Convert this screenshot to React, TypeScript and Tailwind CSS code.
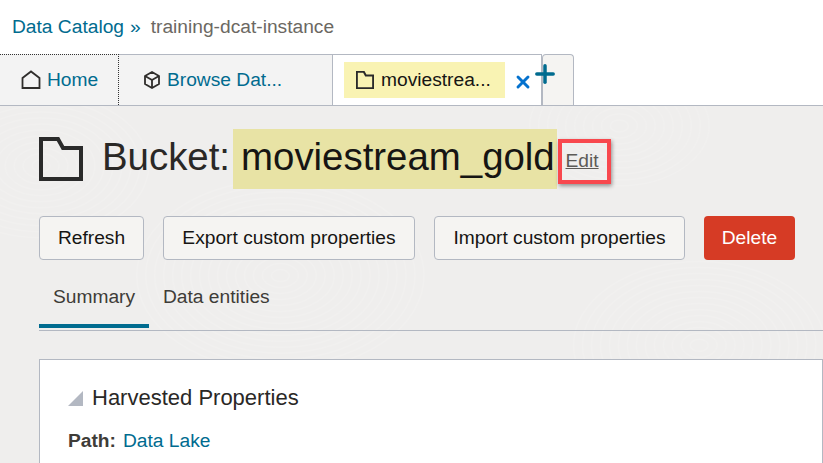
import React from 'react';
import { Plus, X } from 'lucide-react';

const HomeIcon = () => (
  <svg width="20" height="20" viewBox="0 0 20 20" fill="none" stroke="#2f2d2b" strokeWidth="1.8">
    <path d="M1.500 18V8L10 1.500 18.500 8v10z" />
  </svg>
);

const CubeIcon = () => (
  <svg width="18" height="18" viewBox="0 0 18 18" fill="none" stroke="#2f2d2b" strokeWidth="1.8" strokeLinejoin="round">
    <path d="M9 1l7 4v8l-7 4-7-4V5z" />
    <path d="M2 5l7 4 7-4M9 9v8" />
  </svg>
);

const FolderIcon = ({ size, strokeWidth }: { size: number; strokeWidth: number }) => (
  <svg width={size} height={size} viewBox="0 0 44 44" fill="none" stroke="#2a2a2a" strokeWidth={strokeWidth}>
    <path d="M2 2h17l5 9h18v31H2z" />
  </svg>
);

// faint swirls behind the page header
const swirls = [
  { cx: 280, cy: 170, rings: 16 },
  { cx: 40, cy: 60, rings: 12 },
  { cx: 700, cy: 240, rings: 14 },
  { cx: 620, cy: 20, rings: 10 },
];

const Pattern = () => (
  <svg className="absolute inset-0 w-full h-full" viewBox="0 0 823 358" fill="none" stroke="#f1f0ef" strokeWidth="1.500">
    {swirls.map((s) =>
      Array.from({ length: s.rings }, (_, i) => (
        <ellipse key={`${s.cx}-${i}`} cx={s.cx} cy={s.cy} rx={(i + 1) * 9} ry={(i + 1) * 6} />
      ))
    )}
  </svg>
);

const Button = ({ label, w }: { label: string; w: string }) => (
  <button className={`h-11 ${w} rounded border border-[#b3b8c2] bg-[#f5f4f2] text-[19.2px] text-[#161513]`}>{label}</button>
);

export default function App() {
  return (
    <div className="w-[823px] h-[463px] overflow-hidden bg-white font-['Liberation_Sans',sans-serif] text-[19.2px]">
      {/* Breadcrumb */}
      <div className="h-[54px] flex items-center pl-3 text-[#006b8f]">
        <span>Data Catalog</span>
        <span className="ml-[6px]">»</span>
        <span className="ml-[10px] text-[#6b6862]">training-dcat-instance</span>
      </div>

      {/* Tabs */}
      <div className="h-[51px] flex">
        <div className="w-[119px] flex items-center gap-[6px] pl-[21px] bg-[#f3f3f3] border-t border-r border-dotted border-[#333] text-[#006b8f]">
          <HomeIcon />
          <span>Home</span>
        </div>
        <div className="w-[213px] flex items-center gap-[6px] pl-[24px] bg-[#f3f3f3] border-t border-[#b3b8c2] text-[#006b8f]">
          <CubeIcon />
          <span>Browse Dat...</span>
        </div>
        <div className="relative w-[210px] pl-[11px] pt-[7px] bg-white border-x border-t border-[#b3b8c2]">
          <div className="w-[161px] h-9 flex items-center gap-[7px] pl-3 bg-[#f9f3b3] text-[#161513]">
            <FolderIcon size={18} strokeWidth={5} />
            <span>moviestrea...</span>
          </div>
          <X className="absolute left-[180px] top-[17px]" size={20} color="#0572ce" strokeWidth={3.500} />
          <Plus className="absolute left-[198px] top-[5px]" size={28} color="#006b8f" strokeWidth={3} />
        </div>
        <div className="w-[32px] bg-[#f5f4f2] border-x border-t border-[#b3b8c2] rounded-t" />
      </div>

      {/* Content */}
      <div className="relative h-[358px] bg-[#efeeed] border-t border-[#b3b8c2]">
        <Pattern />
        <div className="relative pl-[39px]">
          <div className="h-[84px] pt-[23px] flex items-start">
            <div className="mt-[8px]">
              <FolderIcon size={44} strokeWidth={4} />
            </div>
            <span className="ml-[19px] mt-[4px] text-[38.4px] leading-[48px] text-[#2a2826]">Bucket:</span>
            <span className="ml-[3px] w-[324px] h-[60px] pl-[8px] pt-[4px] bg-[#e8e3a5] text-[38.4px] leading-[48px] text-[#161513]">
              moviestream_gold
            </span>
            <div className="relative ml-[1px] mt-[10px] w-[53px] h-[45px] pr-[5px] flex items-center justify-center border-[4px] border-[#f8484e] shadow-[1px_2px_4px_rgba(0,0,0,0.4)]">
              <span className="underline text-[#5d5b57]">Edit</span>
            </div>
          </div>

          <div className="h-11 mt-[26px] flex">
            <Button label="Refresh" w="w-[105px]" />
            <div className="ml-[19px]"><Button label="Export custom properties" w="w-[252px]" /></div>
            <div className="ml-[19px]"><Button label="Import custom properties" w="w-[251px]" /></div>
            <button className="ml-[19px] h-11 w-[91px] rounded bg-[#d63b25] text-[19.2px] text-white">Delete</button>
          </div>

          <div className="mt-[4px] h-[67px] flex border-b border-[#b3b8c2]">
            <div className="w-[110px] h-[64px] pl-[14px] pt-[19px] border-b-4 border-[#006b8f] text-[#3e3c38]">Summary</div>
            <div className="ml-[14px] pt-[19px] text-[#3e3c38]">Data entities</div>
          </div>

          <div className="mt-[28px] h-[120px] bg-white border border-[#b3b8c2] pl-[28px]">
            <div className="mt-[24px] flex items-center">
              <svg width="15" height="15" viewBox="0 0 15 15"><path d="M15 0v15H0z" fill="#b3b8c2" /></svg>
              <span className="ml-[9px] text-[22px] leading-[28px] text-[#2a2826]">Harvested Properties</span>
            </div>
            <div className="mt-[15px] flex">
              <span className="font-bold text-[#3e3c38]">Path:</span>
              <span className="ml-[7px] text-[#006b8f]">Data Lake</span>
            </div>
          </div>
        </div>
      </div>
    </div>
  );
}
